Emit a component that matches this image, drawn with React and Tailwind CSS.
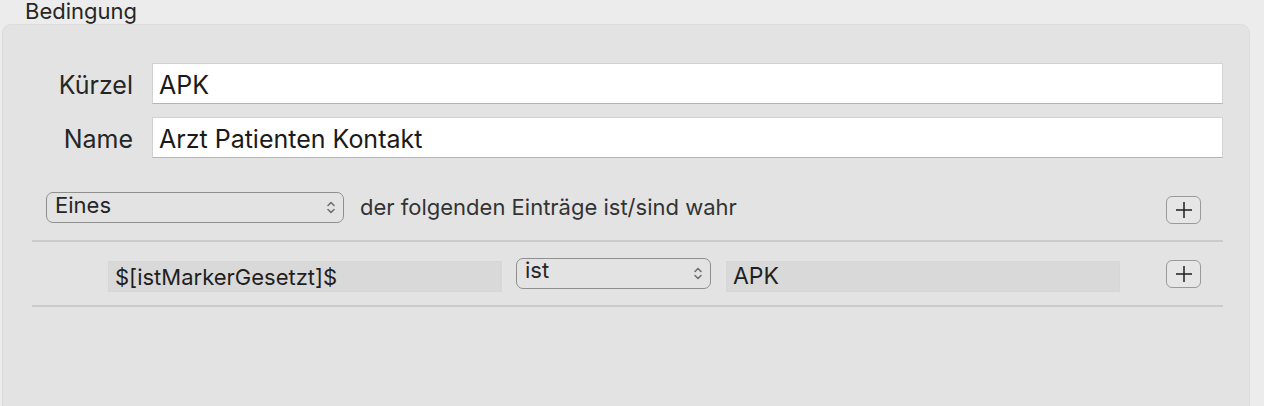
const font = { fontFamily: 'Inter, "Liberation Sans", sans-serif' };

const Chevrons = () => (
  <svg width="10" height="15" viewBox="0 0 10 15" fill="none" stroke="#707070" strokeWidth="1.6" strokeLinecap="round" strokeLinejoin="round">
    <path d="M2 5.5 L5 2.5 L8 5.5" />
    <path d="M2 9.5 L5 12.5 L8 9.5" />
  </svg>
);

const PlusButton = () => (
  <button className="flex h-[28px] w-[35px] items-center justify-center rounded-[6px] border-[1.5px] border-[#9a9a9a] bg-[#e6e6e6]">
    <svg width="18" height="18" viewBox="0 0 18 18" stroke="#1f1f1f" strokeWidth="1.5">
      <path d="M9 1 V17 M1 9 H17" />
    </svg>
  </button>
);

const Select = ({ value, width, shift }) => (
  <div className={`flex h-[31px] ${width} items-center justify-between rounded-[7px] border-[1.5px] border-[#8f8f8f] pl-[8px] pr-[7px] text-[22px] leading-none text-[#262626]`}>
    <span className={shift}>{value}</span>
    <Chevrons />
  </div>
);

const Field = ({ label, value }) => (
  <div className="flex items-center">
    <span className="w-[131px] pr-[1px] pt-[3px] text-right text-[25px] leading-none text-[#262626]">{label}</span>
    <div className="ml-[18px] flex h-[41px] flex-1 items-center border border-[#d2d2d2] border-b-[#b5b5b5] bg-white pl-[6px] pt-[4px] text-[25px] leading-none text-[#1a1a1a]">
      {value}
    </div>
  </div>
);

export default function App() {
  return (
    <div className="h-[406px] w-[1264px] overflow-hidden bg-[#ececec]" style={font}>
      <div className="pl-[25px] text-[22px] leading-[22px] text-[#262626]">Bedingung</div>
      <div className="ml-[2px] mt-[2px] h-[400px] w-[1248px] rounded-[9px] border border-[#dcdcdc] bg-[#e3e3e3]">
        <div className="flex flex-col gap-[13px] pr-[26px] pt-[38px]">
          <Field label="Kürzel" value="APK" />
          <Field label="Name" value="Arzt Patienten Kontakt" />
        </div>
        <div className="mr-[26px] ml-[29px] mt-[21px]">
          <div className="flex h-[63px] items-center border-b-2 border-[#cbcbcb] pl-[14px] pr-[20px] pb-[4px]">
            <Select value="Eines" width="w-[298px]" shift="-mt-[6px]" />
            <span className="ml-[16px] -mt-[2px] text-[22px] leading-none text-[#333]">der folgenden Einträge ist/sind wahr</span>
            <div className="ml-auto mt-[4px] mr-[2px]"><PlusButton /></div>
          </div>
          <div className="flex h-[65px] items-center border-b-2 border-[#cbcbcb] pl-[76px] pr-[20px]">
            <div className="mt-[6px] flex h-[31px] w-[394px] items-center border border-[#d6d6d6] bg-[#d9d9d9] pl-[6px] text-[22px] leading-none text-[#1f1f1f]">
              $[istMarkerGesetzt]$
            </div>
            <div className="ml-[14px]"><Select value="ist" width="w-[195px]" shift="-mt-[8px]" /></div>
            <div className="ml-[15px] mt-[6px] flex h-[31px] w-[394px] items-center border border-[#d6d6d6] bg-[#d9d9d9] pl-[6px] text-[23px] leading-none text-[#1f1f1f]">
              APK
            </div>
            <div className="ml-auto mr-[2px]"><PlusButton /></div>
          </div>
        </div>
      </div>
    </div>
  );
}
